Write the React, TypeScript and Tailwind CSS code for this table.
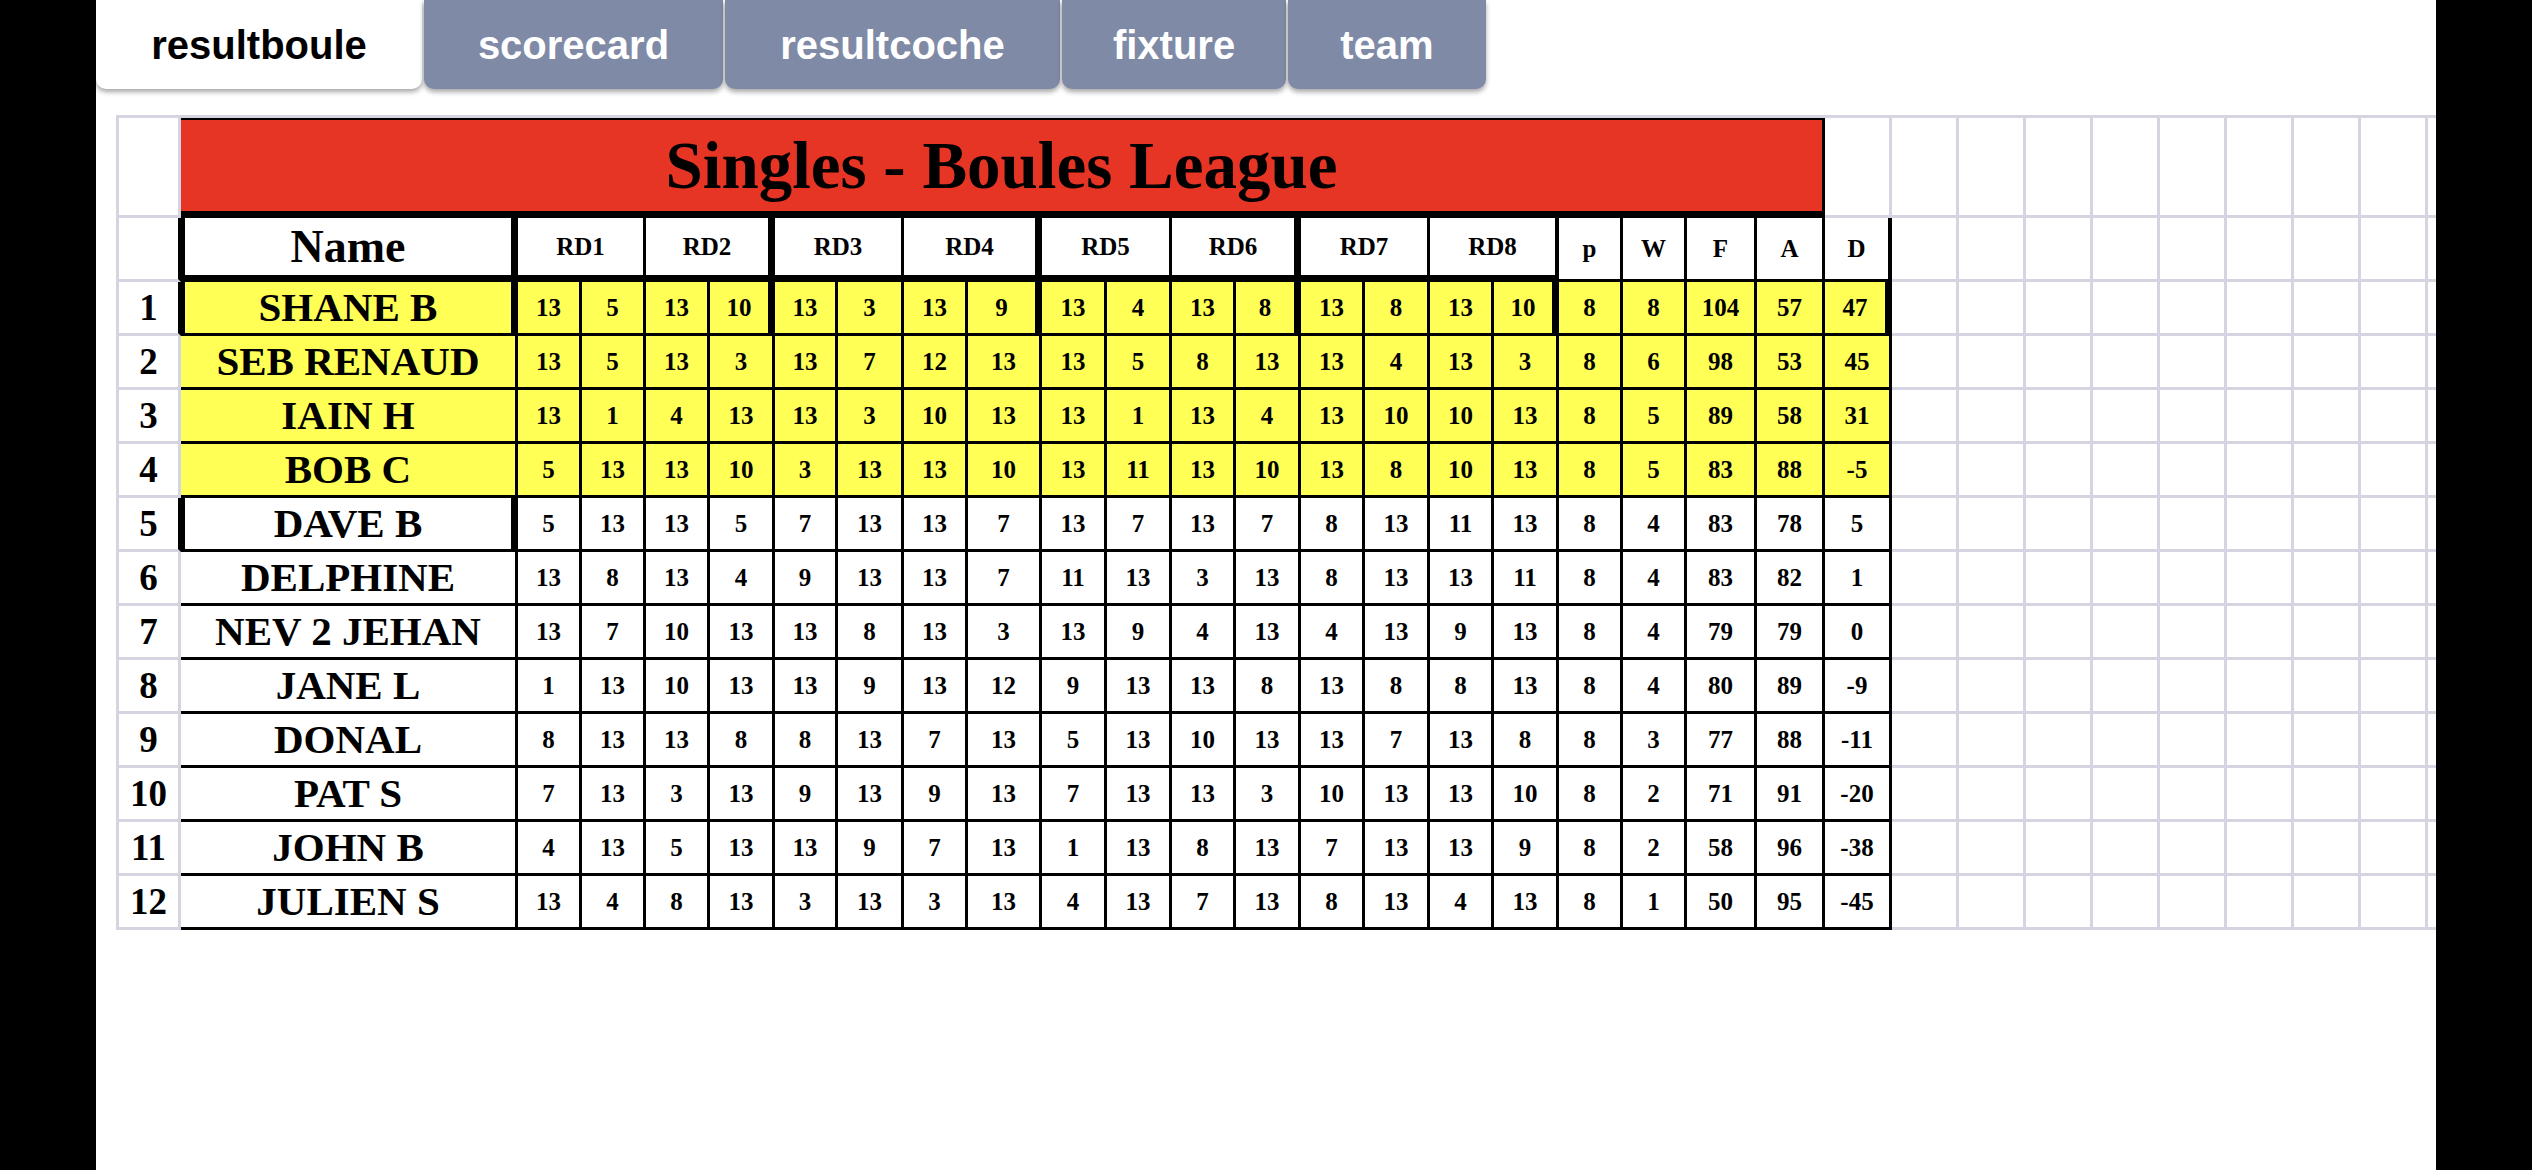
import React from "react";

// --- Data ---

interface Player {
  name: string;
  scores: number[];
  p: number;
  w: number;
  f: number;
  a: number;
  d: number;
}

const PLAYERS: Player[] = [
  { name: "SHANE B", scores: [13, 5, 13, 10, 13, 3, 13, 9, 13, 4, 13, 8, 13, 8, 13, 10], p: 8, w: 8, f: 104, a: 57, d: 47 },
  { name: "SEB RENAUD", scores: [13, 5, 13, 3, 13, 7, 12, 13, 13, 5, 8, 13, 13, 4, 13, 3], p: 8, w: 6, f: 98, a: 53, d: 45 },
  { name: "IAIN H", scores: [13, 1, 4, 13, 13, 3, 10, 13, 13, 1, 13, 4, 13, 10, 10, 13], p: 8, w: 5, f: 89, a: 58, d: 31 },
  { name: "BOB C", scores: [5, 13, 13, 10, 3, 13, 13, 10, 13, 11, 13, 10, 13, 8, 10, 13], p: 8, w: 5, f: 83, a: 88, d: -5 },
  { name: "DAVE B", scores: [5, 13, 13, 5, 7, 13, 13, 7, 13, 7, 13, 7, 8, 13, 11, 13], p: 8, w: 4, f: 83, a: 78, d: 5 },
  { name: "DELPHINE", scores: [13, 8, 13, 4, 9, 13, 13, 7, 11, 13, 3, 13, 8, 13, 13, 11], p: 8, w: 4, f: 83, a: 82, d: 1 },
  { name: "NEV 2 JEHAN", scores: [13, 7, 10, 13, 13, 8, 13, 3, 13, 9, 4, 13, 4, 13, 9, 13], p: 8, w: 4, f: 79, a: 79, d: 0 },
  { name: "JANE L", scores: [1, 13, 10, 13, 13, 9, 13, 12, 9, 13, 13, 8, 13, 8, 8, 13], p: 8, w: 4, f: 80, a: 89, d: -9 },
  { name: "DONAL", scores: [8, 13, 13, 8, 8, 13, 7, 13, 5, 13, 10, 13, 13, 7, 13, 8], p: 8, w: 3, f: 77, a: 88, d: -11 },
  { name: "PAT S", scores: [7, 13, 3, 13, 9, 13, 9, 13, 7, 13, 13, 3, 10, 13, 13, 10], p: 8, w: 2, f: 71, a: 91, d: -20 },
  { name: "JOHN B", scores: [4, 13, 5, 13, 13, 9, 7, 13, 1, 13, 8, 13, 7, 13, 13, 9], p: 8, w: 2, f: 58, a: 96, d: -38 },
  { name: "JULIEN S", scores: [13, 4, 8, 13, 3, 13, 3, 13, 4, 13, 7, 13, 8, 13, 4, 13], p: 8, w: 1, f: 50, a: 95, d: -45 },
];

const TABS = [
  { label: "resultboule", width: "w-[326px]", active: true },
  { label: "scorecard", width: "w-[299px]", active: false },
  { label: "resultcoche", width: "w-[335px]", active: false },
  { label: "fixture", width: "w-[224px]", active: false },
  { label: "team", width: "w-[198px]", active: false },
];

const SUB_W = [
  "w-[64px]", "w-[64px]", "w-[64px]", "w-[65px]",
  "w-[63px]", "w-[66px]", "w-[64px]", "w-[74px]",
  "w-[65px]", "w-[65px]", "w-[64px]", "w-[65px]",
  "w-[64px]", "w-[65px]", "w-[64px]", "w-[65px]",
];

const RD_W = ["w-[128px]", "w-[129px]", "w-[129px]", "w-[138px]", "w-[130px]", "w-[129px]", "w-[129px]", "w-[129px]"];

const STAT_W = ["w-[64px]", "w-[64px]", "w-[70px]", "w-[68px]"];

const EXTRAS = [0, 1, 2, 3, 4, 5, 6, 7, 8];

const CELL = "shrink-0 flex items-center justify-center leading-none";

// --- Sub-components ---

const GridCells = () => (
  <>
    {EXTRAS.map((i) => (
      <div key={i} className={`${CELL} w-[67px] border-r-[3px] border-b-[3px] border-[#d5d5e1] bg-white`} />
    ))}
  </>
);

const TitleRow = () => (
  <div className="flex h-[100px]">
    <div className={`${CELL} w-[65px] border-l-[3px] border-r-[3px] border-b-[3px] border-[#d5d5e1]`} />
    <div
      className={`${CELL} w-[1644px] bg-[#e73525] border-t-[2px] border-r-[3px] border-b-[7px] border-black text-[67px] font-bold text-black`}
    >
      Singles - Boules League
    </div>
    <div className={`${CELL} w-[67px] border-r-[3px] border-b-[3px] border-[#d5d5e1]`} />
    <GridCells />
  </div>
);

const HeaderRow = () => (
  <div className="flex h-[64px]">
    <div className={`${CELL} w-[65px] border-l-[3px] border-b-[3px] border-l-[#d5d5e1] border-b-[#d5d5e1] border-r-[3px] border-r-black`} />
    <div className={`${CELL} w-[337px] bg-white border-l-[4px] border-r-[7px] border-b-[7px] border-black text-[46px] font-bold`}>
      Name
    </div>
    {RD_W.map((w, i) => (
      <div
        key={i}
        className={`${CELL} ${w} bg-white border-b-[7px] border-black text-[25px] font-bold ${
          i % 2 === 1 && i < 7 ? "border-r-[7px]" : i === 7 ? "border-r-[4px]" : "border-r-[3px]"
        }`}
      >
        RD{i + 1}
      </div>
    ))}
    {["p", "W", "F", "A"].map((h, i) => (
      <div key={h} className={`${CELL} ${STAT_W[i]} bg-white border-r-[3px] border-b-[3px] border-black text-[25px] font-bold`}>
        {h}
      </div>
    ))}
    <div className={`${CELL} w-[67px] bg-white border-r-[4px] border-b-[3px] border-black text-[25px] font-bold`}>D</div>
    <GridCells />
  </div>
);

const PlayerRow = ({ player, index }: { player: Player; index: number }) => {
  const first = index === 0;
  const framed = index === 0 || index === 4;
  const bg = index < 4 ? "bg-[#ffff55]" : "bg-white";

  return (
    <div className="flex h-[54px]">
      <div
        className={`${CELL} w-[65px] bg-white border-l-[3px] border-b-[3px] border-r-[3px] border-l-[#d5d5e1] border-b-[#d5d5e1] ${
          framed ? "border-r-black" : "border-r-[#d5d5e1]"
        } text-[37px] font-bold`}
      >
        {index + 1}
      </div>
      <div
        className={`${CELL} w-[337px] ${bg} border-b-[3px] border-black text-[41px] font-bold whitespace-nowrap ${
          framed ? "border-l-[4px] border-r-[7px]" : "border-r-[3px]"
        }`}
      >
        {player.name}
      </div>
      {player.scores.map((s, i) => (
        <div
          key={i}
          className={`${CELL} ${SUB_W[i]} ${bg} border-b-[3px] border-black text-[25px] font-bold ${
            first && i % 4 === 3 ? "border-r-[7px]" : "border-r-[3px]"
          }`}
        >
          {s}
        </div>
      ))}
      {[player.p, player.w, player.f, player.a].map((v, i) => (
        <div key={i} className={`${CELL} ${STAT_W[i]} ${bg} border-r-[3px] border-b-[3px] border-black text-[25px] font-bold`}>
          {v}
        </div>
      ))}
      <div
        className={`${CELL} w-[67px] ${bg} border-b-[3px] border-black text-[25px] font-bold ${
          first ? "border-r-[7px]" : "border-r-[3px]"
        }`}
      >
        {player.d}
      </div>
      <GridCells />
    </div>
  );
};

// --- Main Component ---

export default function App() {
  return (
    <div className="flex h-[1170px] w-[2532px] overflow-hidden bg-black">
      <div className="ml-[96px] flex h-full w-[2340px] flex-col overflow-hidden bg-white">
        {/* Tabs */}
        <div className="flex h-[89px] gap-[2px]">
          {TABS.map((tab) => (
            <div
              key={tab.label}
              className={`${tab.width} flex h-full items-center justify-center rounded-b-[10px] font-['Liberation_Sans',Arial,sans-serif] text-[40px] font-bold shadow-[0_3px_5px_rgba(0,0,0,0.35)] ${
                tab.active ? "bg-white text-black" : "bg-[#7f8aa7] text-white"
              }`}
            >
              {tab.label}
            </div>
          ))}
        </div>

        {/* Sheet */}
        <div className="ml-[20px] mt-[26px] flex flex-col overflow-hidden border-t-[3px] border-[#d5d5e1] font-['Liberation_Serif','Times_New_Roman',serif] text-black">
          <TitleRow />
          <HeaderRow />
          {PLAYERS.map((player, i) => (
            <PlayerRow key={player.name} player={player} index={i} />
          ))}
        </div>
      </div>
    </div>
  );
}
